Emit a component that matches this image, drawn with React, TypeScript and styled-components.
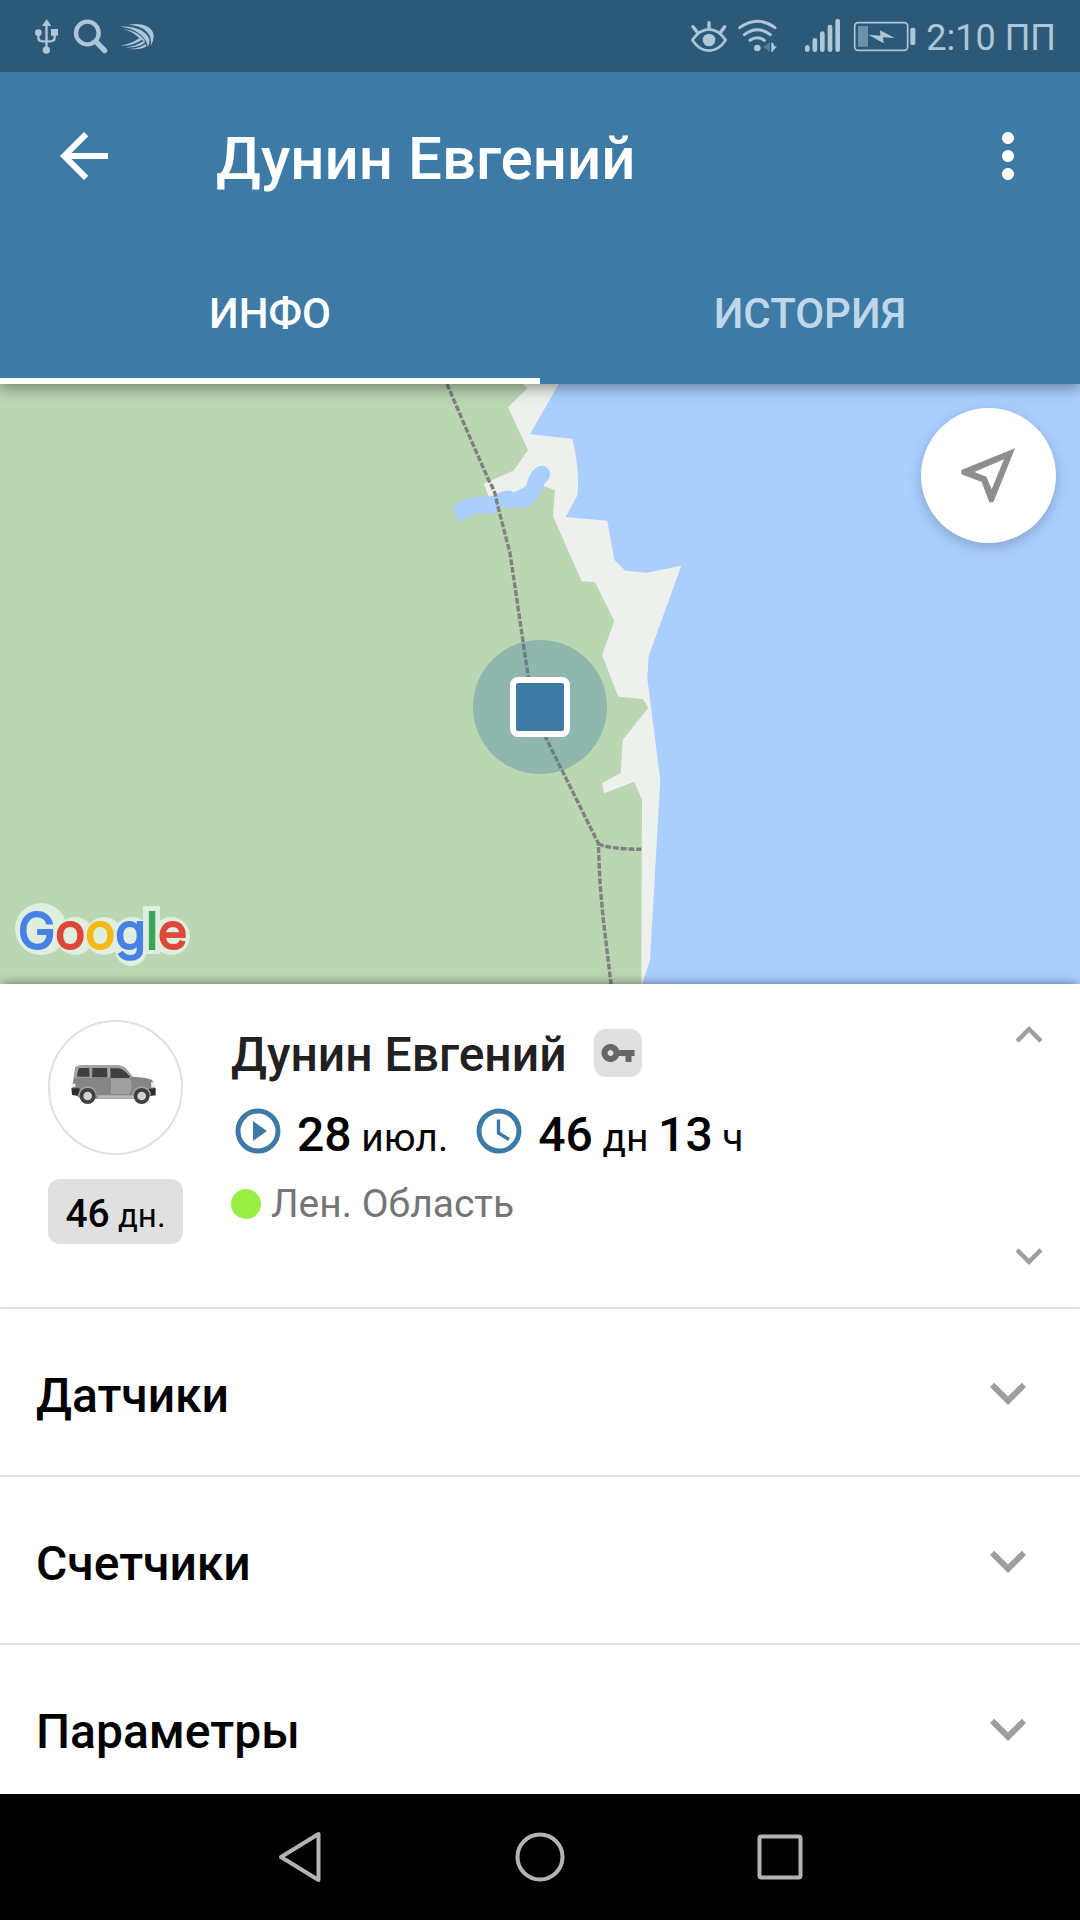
import React, { useState } from 'react';
import styled, { createGlobalStyle } from 'styled-components';

const color = {
  primary: '#3d7aa6',
  primaryDark: '#2c5978',
  status: '#adc6d8',
  line: '#e0e0e0',
  muted: '#9e9e9e',
};

const GlobalStyle = createGlobalStyle`
  *, *::before, *::after { box-sizing: border-box; }
  body { margin: 0; background: #fff; font-family: Roboto, 'Noto Sans', sans-serif; }
  h1, h2, h3, p { margin: 0; font-weight: 500; }
  button { padding: 0; border: 0; background: none; font: inherit; color: inherit; cursor: pointer; }
  svg { display: block; flex: none; }
`;

const Screen = styled.div`
  display: flex;
  flex-direction: column;
  height: 100vh;
`;

/* Status bar */

const StatusBar = styled.div`
  position: relative;
  z-index: 3;
  display: flex;
  justify-content: space-between;
  flex: none;
  height: 72px;
  padding: 0 24px 0 32px;
  background: ${color.primaryDark};
  color: ${color.status};
`;

const StatusGroup = styled.div<{ $gap: number }>`
  display: flex;
  align-items: center;
  gap: ${(p) => p.$gap}px;
`;

const Clock = styled.span`
  padding-top: 3px;
  font-size: 36px;
  line-height: 44px;
`;

/* App bar */

const AppBar = styled.header`
  position: relative;
  z-index: 2;
  flex: none;
  background: ${color.primary};
  color: #fff;
  box-shadow: 0 4px 14px rgba(0, 0, 0, 0.4);
`;

const Toolbar = styled.div`
  display: flex;
  align-items: center;
  height: 168px;
  padding: 0 36px 0 48px;
`;

const Title = styled.h1`
  flex: 1;
  margin-left: 96px;
  padding-top: 6px;
  font-size: 60px;
  line-height: 72px;
`;

const IconButton = styled.button`
  display: block;
  flex: none;
`;

const Tabs = styled.div`
  display: grid;
  grid-template-columns: 1fr 1fr;
`;

const Tab = styled.button<{ $active: boolean }>`
  height: 144px;
  padding-top: 10px;
  border-bottom: 6px solid ${(p) => (p.$active ? '#fff' : 'transparent')};
  font-size: 42px;
  font-weight: 500;
  line-height: 48px;
  color: ${(p) => (p.$active ? '#fff' : '#bfd7e8')};
`;

/* Map */

const Content = styled.main`
  flex: 1;
  min-height: 0;
  overflow-y: auto;
  scrollbar-width: none;
`;

const MapView = styled.section`
  position: relative;
  height: 600px;
  overflow: hidden;
  background: #bad6b2;
`;

const MapDrawing = styled.svg`
  width: 100%;
  height: 100%;
`;

const Marker = styled.div`
  position: absolute;
  top: 323px;
  left: 50%;
  display: grid;
  place-items: center;
  width: 134px;
  height: 134px;
  border-radius: 50%;
  background: rgba(61, 122, 166, 0.33);
  transform: translate(-50%, -50%);

  &::after {
    content: '';
    width: 60px;
    height: 60px;
    border: 6px solid #fff;
    border-radius: 8px;
    background: ${color.primary};
  }
`;

const LocateButton = styled.button`
  position: absolute;
  top: 24px;
  right: 24px;
  width: 135px;
  height: 135px;
  border-radius: 50%;
  background: #fff;
  box-shadow: 0 4px 14px rgba(0, 0, 0, 0.22);
`;

const Attribution = styled.svg`
  position: absolute;
  left: 12px;
  bottom: 0;
`;

/* Vehicle card */

const Card = styled.section`
  position: relative;
  z-index: 1;
  display: flex;
  gap: 48px;
  min-height: 325px;
  padding: 24px 24px 24px 48px;
  border-bottom: 2px solid ${color.line};
  background: #fff;
  box-shadow: 0 -5px 8px -3px rgba(0, 0, 0, 0.35);
`;

const Side = styled.div`
  display: flex;
  flex-direction: column;
  gap: 24px;
  width: 135px;
  padding-top: 12px;
`;

const Avatar = styled.div`
  display: grid;
  place-items: center;
  height: 135px;
  border: 2px solid ${color.line};
  border-radius: 50%;
`;

const Amount = styled.span<{ $small?: boolean }>`
  font-size: ${(p) => (p.$small ? 33 : 39)}px;

  b {
    font-size: ${(p) => (p.$small ? 39 : 48)}px;
    font-weight: 500;
  }
`;

const DaysBadge = styled.div`
  height: 65px;
  padding-top: 5px;
  border-radius: 12px;
  background: ${color.line};
  line-height: 60px;
  text-align: center;
`;

const Details = styled.div`
  flex: 1;
  padding-top: 12px;
`;

const NameRow = styled.div`
  display: flex;
  align-items: center;
  gap: 27px;
  height: 66px;
`;

const Name = styled.h2`
  padding-top: 4px;
  font-size: 48px;
  line-height: 66px;
  color: #212121;
`;

const KeyBadge = styled.span`
  display: grid;
  place-items: center;
  width: 48px;
  height: 48px;
  border-radius: 12px;
  background: ${color.line};
`;

const StatRow = styled.div`
  display: flex;
  gap: 24px;
  margin: 18px 0 12px;
  line-height: 62px;
`;

const Stat = styled.span`
  display: flex;
  gap: 12px;
  align-items: flex-start;
`;

const Place = styled.p`
  display: flex;
  align-items: center;
  gap: 10px;
  font-size: 39px;
  font-weight: 400;
  line-height: 46px;
  color: #757575;
`;

const Dot = styled.i`
  width: 30px;
  height: 30px;
  border-radius: 50%;
  background: #99f045;
`;

const Pager = styled.div`
  display: flex;
  flex-direction: column;
  justify-content: space-between;
  color: ${color.muted};
`;

/* Expandable sections */

const SectionButton = styled.button`
  display: flex;
  align-items: center;
  justify-content: space-between;
  width: 100%;
  height: 168px;
  padding: 2px 36px 0;
  border-bottom: 2px solid ${color.line};
  color: ${color.muted};
`;

const SectionTitle = styled.span`
  padding-top: 6px;
  font-size: 48px;
  font-weight: 500;
  line-height: 56px;
  color: #000;
`;

/* System navigation */

const NavBar = styled.nav`
  display: flex;
  align-items: center;
  justify-content: center;
  gap: 168px;
  flex: none;
  height: 126px;
  background: #000;
  color: #b3b3b3;
`;

const MaterialIcon = ({ d, size }: { d: string; size: number }) => (
  <svg width={size} height={size} viewBox="0 0 24 24" fill="currentColor" aria-hidden="true">
    <path d={d} />
  </svg>
);

const paths = {
  back: 'M20 11H7.83l5.59-5.59L12 4l-8 8 8 8 1.41-1.41L7.83 13H20v-2z',
  more: 'M12 8c1.1 0 2-.9 2-2s-.9-2-2-2-2 .9-2 2 .9 2 2 2zm0 2c-1.1 0-2 .9-2 2s.9 2 2 2 2-.9 2-2-.9-2-2-2zm0 6c-1.1 0-2 .9-2 2s.9 2 2 2 2-.9 2-2-.9-2-2-2z',
  less: 'M12 8l-6 6 1.41 1.41L12 10.83l4.59 4.58L18 14z',
  expand: 'M16.59 8.59L12 13.17 7.41 8.59 6 10l6 6 6-6z',
  key: 'M12.65 10C11.83 7.67 9.61 6 7 6c-3.31 0-6 2.69-6 6s2.69 6 6 6c2.61 0 4.83-1.67 5.65-4H17v4h4v-4h2v-4H12.65zM7 14c-1.1 0-2-.9-2-2s.9-2 2-2 2 .9 2 2-.9 2-2 2z',
};

const UsbIcon = () => (
  <svg width="30" height="72" viewBox="96 0 90 216" aria-hidden="true">
    <g fill="currentColor">
      <path d="M140 57l14 21h-28z" />
      <circle cx="139" cy="150" r="11" />
      <circle cx="115" cy="98" r="10" />
      <path d="M153 87h21v20h-21z" />
    </g>
    <path d="M139.500 70v80M115 98v14q0 12 12 12h25q12 0 12-12V98" fill="none" stroke="currentColor" strokeWidth="7" />
  </svg>
);

const SearchIcon = () => (
  <svg width="35" height="72" viewBox="222 0 105 216" fill="none" stroke="currentColor" aria-hidden="true">
    <circle cx="265" cy="99" r="34" strokeWidth="13" />
    <path d="M291 125l26 27" strokeWidth="16" strokeLinecap="round" />
  </svg>
);

const SwipeIcon = () => (
  <svg width="36" height="72" viewBox="356 0 108 216" fill="currentColor" aria-hidden="true">
    <path d="M385 74C425 67 458 80 460 106Q460 124 451 137Q454 118 447 105C435 84 412 77 385 74z" />
    <path d="M360 80C402 76 442 94 448 120Q448 132 442 140Q440 124 430 113C412 92 388 83 360 80z" />
    <path d="M368 88C395 88 428 106 435 126Q422 119 413 111C400 99 386 91 368 88z" />
    <path d="M360 137Q392 132 418 114L425 119Q398 138 360 137z" />
    <path d="M376 142Q408 139 429 123L434 128Q412 144 376 142z" />
    <path d="M388 147Q416 145 436 132L438 140Q418 150 388 147z" />
  </svg>
);

const EyeIcon = () => (
  <svg width="38" height="72" viewBox="90 0 114 216" fill="none" stroke="currentColor" strokeWidth="8" strokeLinecap="round" aria-hidden="true">
    <path d="M97 120Q119 88 147 88Q175 88 197 120Q176 152 147 152Q118 152 97 120z" strokeLinejoin="round" />
    <circle cx="147" cy="120" r="19" fill="currentColor" stroke="none" />
    <path d="M147 68v18M99 80l13 17M194 80l-12 17" strokeWidth="10" />
  </svg>
);

const WifiIcon = () => (
  <svg width="56" height="72" viewBox="231 0 168 216" fill="none" stroke="currentColor" strokeWidth="9" strokeLinecap="round" aria-hidden="true">
    <path d="M236 83Q289 44 342 83M250 104Q289 74 328 104M267 121Q289 105 310 121" />
    <circle cx="289" cy="144" r="10" fill="currentColor" stroke="none" />
    <path d="M327 127v28l-20-14z" fill="#557e99" stroke="none" />
    <path d="M331 127v28q3 2 5-2l12-14h-8q-1-10-9-12z" fill="currentColor" stroke="none" />
  </svg>
);

const SignalIcon = () => (
  <svg width="39" height="72" viewBox="429 0 117 216" stroke="currentColor" strokeWidth="14" strokeLinecap="round" aria-hidden="true">
    <path d="M439 142v7M461.500 121v28M484 101v48M507 81v68M530 63v86" />
  </svg>
);

const BatteryIcon = () => (
  <svg width="63" height="72" viewBox="581 0 189 216" aria-hidden="true">
    <rect x="586" y="68" width="159" height="83" rx="10" fill="none" stroke="currentColor" strokeWidth="5" />
    <rect x="596" y="78" width="30" height="62" fill="#6b91aa" />
    <rect x="753" y="83" width="15" height="52" rx="5" fill="currentColor" />
    <path d="M627 104l36 3-1-16 44 23-35-2 2 18z" fill="currentColor" />
  </svg>
);

const PlayIcon = () => (
  <svg width="54" height="54" viewBox="0 0 54 54" aria-hidden="true">
    <circle cx="27" cy="27" r="20" fill="none" stroke={color.primary} strokeWidth="5" />
    <path d="M22 17v20l14-10z" fill={color.primary} />
  </svg>
);

const ClockIcon = () => (
  <svg width="54" height="54" viewBox="0 0 54 54" fill="none" stroke={color.primary} aria-hidden="true">
    <circle cx="27" cy="27" r="20" strokeWidth="5" />
    <path d="M26.500 15.500V29l10.500 6.500" strokeWidth="3.400" />
  </svg>
);

const CarIcon = () => (
  <svg width="100" height="56" viewBox="5 12 300 168" aria-hidden="true">
    <path d="M33 34Q38 28 60 28H160Q174 28 184 37L205 62Q245 64 262 71Q270 78 272 98V110L262 118L236 128H50L24 110V88Q30 60 33 34z" fill="#858585" />
    <path d="M33 34Q38 28 60 28H160Q174 28 184 37L205 65H28z" fill="#a3a3a3" />
    <path d="M44 36h31l1 26H38q1-16 6-26zM84 36h44l1 28H83zM138 37h26q10 1 18 9l16 16-6 4h-53z" fill="#3f3f3f" />
    <path d="M140 67h55q8 6 7 28l-8 20h-54z" fill="#a0a0a0" />
    <path d="M100 118h112v9H100z" fill="#b8b8b8" />
    <path d="M21 97h24l2 12-8 10-16-2zM252 99l22-3v22l-20 3z" fill="#2e2e2e" />
    <path d="M21 83h12v10H21zM260 79l9-1 4 16-12 1z" fill="#ececec" />
    <path d="M42 118a28 28 0 0 1 56 2l-8 2H48zM204 118a28 28 0 0 1 56 0l-8 4h-42z" fill="#a3a3a3" />
    <circle cx="70" cy="120" r="24" fill="#3f3f3f" />
    <circle cx="70" cy="120" r="13" fill="#d2d2d2" />
    <circle cx="232" cy="120" r="24" fill="#3f3f3f" />
    <circle cx="232" cy="120" r="13" fill="#d2d2d2" />
  </svg>
);

const CoastMap = () => (
  <MapDrawing viewBox="0 384 1080 600" preserveAspectRatio="xMidYMid slice" role="img" aria-label="Карта">
    <path d="M-2000 384H3000V984H-2000z" fill="#aacfff" />
    <path
      d="M-2000 384H558.700L530 434.300L572.300 438.700Q580 470 577.500 495L565.700 517L607.300 520.700L614.300 559.700L625.300 570.700L646.700 572.700L681.300 565.700L648.700 656L647.300 678.300L660.300 780L650 960L642.300 984H-2000z"
      fill="#edf0ec"
    />
    <path
      d="M-2000 384H523L527.300 388.300L508 407.300L528 450L513.300 471L484 483.700L489 497L543.700 486L555 490.300L553 516.300L581.700 581.300L595 582.300L614.300 621L602 655L618.300 696.700L642.700 699L648.300 707.700L622.700 740L620.700 773.300L602 783L604 793.300L634.300 781.700L642 800L641.300 984H-2000z"
      fill="#bad6b2"
    />
    <g transform="translate(420 380) scale(0.3333)">
      <path d="M192 311l84-37 60 0-10 50-119 26z" fill="#edf0ec" />
      <path
        d="M101 386C112 362 160 348 195 350L225 347C245 330 270 330 280 337C305 327 316 322 320 312C328 280 345 257 368 257C392 260 396 288 382 302C371 310 372 318 365 333C350 372 320 386 285 384L240 383C225 402 205 405 180 400C150 402 135 427 120 422C110 412 97 398 101 386z"
        fill="#aacfff"
      />
    </g>
    <g fill="none" stroke="#7f827d" strokeWidth="3.400" strokeDasharray="6 1.800">
      <path d="M447 384L471 440L490 483Q495 490 497 503L510 553L528 675L541 728L598.300 843.300L600 883L603 917L611 984" />
      <path d="M598.300 843.300Q606 849 641.300 849.300" />
    </g>
  </MapDrawing>
);

const GoogleLogo = () => (
  <Attribution width="200" height="100" viewBox="12 884 200 100" role="img" aria-label="Google">
    <g fill="#dfeede">
      <circle cx="41" cy="929" r="26" />
      <circle cx="75" cy="936" r="19" />
      <circle cx="104" cy="936" r="19" />
      <circle cx="132" cy="936" r="19" />
      <circle cx="131" cy="950" r="16" />
      <rect x="143" y="906" width="17" height="48" />
      <circle cx="171" cy="936" r="19" />
    </g>
    <text x="18" y="949" fontFamily="Inter, Roboto, sans-serif" fontSize="50" fontWeight="400" strokeWidth="2">
      <tspan fill="#4682e6" stroke="#4682e6">G</tspan>
      <tspan fill="#dc483a" stroke="#dc483a">o</tspan>
      <tspan fill="#f4b912" stroke="#f4b912">o</tspan>
      <tspan fill="#4682e6" stroke="#4682e6">g</tspan>
      <tspan fill="#3ba55b" stroke="#3ba55b">l</tspan>
      <tspan fill="#dc483a" stroke="#dc483a">e</tspan>
    </text>
  </Attribution>
);

const tabs = ['ИНФО', 'ИСТОРИЯ'];
const sections = ['Датчики', 'Счетчики', 'Параметры'];

export default function App() {
  const [active, setActive] = useState(0);

  return (
    <Screen>
      <GlobalStyle />
      <StatusBar>
        <StatusGroup $gap={11}>
          <UsbIcon />
          <SearchIcon />
          <SwipeIcon />
        </StatusGroup>
        <StatusGroup $gap={10}>
          <EyeIcon />
          <WifiIcon />
          <SignalIcon />
          <BatteryIcon />
          <Clock>2:10 ПП</Clock>
        </StatusGroup>
      </StatusBar>

      <AppBar>
        <Toolbar>
          <IconButton aria-label="Назад">
            <MaterialIcon d={paths.back} size={72} />
          </IconButton>
          <Title>Дунин Евгений</Title>
          <IconButton aria-label="Ещё">
            <MaterialIcon d={paths.more} size={72} />
          </IconButton>
        </Toolbar>
        <Tabs role="tablist">
          {tabs.map((label, i) => (
            <Tab key={label} role="tab" aria-selected={i === active} $active={i === active} onClick={() => setActive(i)}>
              {label}
            </Tab>
          ))}
        </Tabs>
      </AppBar>

      <Content>
        <MapView>
          <CoastMap />
          <Marker />
          <GoogleLogo />
          <LocateButton aria-label="Моё местоположение">
            <svg width="135" height="135" viewBox="62 83 405 405" aria-hidden="true">
              <path
                d="M344 204L183 269V282L244 305L267 366H279zM311 237L274 327L258 289L222 275z"
                fill="#8e8e92"
                fillRule="evenodd"
              />
            </svg>
          </LocateButton>
        </MapView>

        <Card>
          <Side>
            <Avatar>
              <CarIcon />
            </Avatar>
            <DaysBadge>
              <Amount $small>
                <b>46</b> дн.
              </Amount>
            </DaysBadge>
          </Side>
          <Details>
            <NameRow>
              <Name>Дунин Евгений</Name>
              <KeyBadge>
                <svg width="36" height="36" viewBox="0 0 24 24" fill="#666" aria-hidden="true">
                  <path d={paths.key} />
                </svg>
              </KeyBadge>
            </NameRow>
            <StatRow>
              <Stat>
                <PlayIcon />
                <Amount>
                  <b>28</b> июл.
                </Amount>
              </Stat>
              <Stat>
                <ClockIcon />
                <Amount>
                  <b>46</b> дн <b>13</b> ч
                </Amount>
              </Stat>
            </StatRow>
            <Place>
              <Dot />
              Лен. Область
            </Place>
          </Details>
          <Pager>
            <IconButton aria-label="Предыдущий">
              <MaterialIcon d={paths.less} size={54} />
            </IconButton>
            <IconButton aria-label="Следующий">
              <MaterialIcon d={paths.expand} size={54} />
            </IconButton>
          </Pager>
        </Card>

        {sections.map((title) => (
          <SectionButton key={title} aria-expanded={false}>
            <SectionTitle>{title}</SectionTitle>
            <MaterialIcon d={paths.expand} size={72} />
          </SectionButton>
        ))}
      </Content>

      <NavBar>
        <IconButton aria-label="Назад">
          <svg width="72" height="72" viewBox="0 0 72 72" fill="none" stroke="currentColor" strokeWidth="4" strokeLinejoin="round" aria-hidden="true">
            <path d="M17 36L54.500 13V59z" />
          </svg>
        </IconButton>
        <IconButton aria-label="Домой">
          <svg width="72" height="72" viewBox="0 0 72 72" fill="none" stroke="currentColor" strokeWidth="4" aria-hidden="true">
            <circle cx="36" cy="36" r="22.500" />
          </svg>
        </IconButton>
        <IconButton aria-label="Обзор">
          <svg width="72" height="72" viewBox="0 0 72 72" fill="none" stroke="currentColor" strokeWidth="4" aria-hidden="true">
            <rect x="15.500" y="15.500" width="41" height="41" rx="2" />
          </svg>
        </IconButton>
      </NavBar>
    </Screen>
  );
}
